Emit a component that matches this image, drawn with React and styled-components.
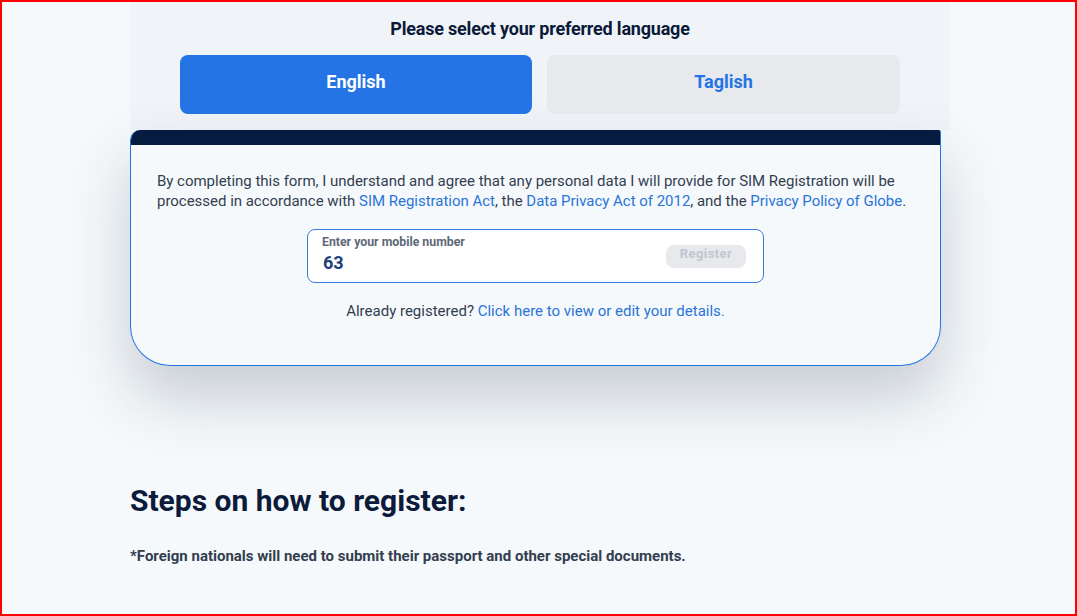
import React from "react";
import styled, { createGlobalStyle } from "styled-components";

const colors = {
  page: "#f5f9fc",
  panel: "#f0f3f8",
  navy: "#061b40",
  blue: "#2474e5",
  link: "#2a74d8",
  text: "#333e50",
  grey: "#e8e9ec",
};

const GlobalStyle = createGlobalStyle`
  html, body {
    margin: 0;
    padding: 0;
    background: ${colors.page};
    font-family: Roboto, "Liberation Sans", Arial, sans-serif;
  }
  #root {
    box-sizing: border-box;
    height: 100vh;
    overflow: hidden;
    border: 2px solid #ff0000;
  }
`;

const Page = styled.div`
  padding-left: 128px;
  width: 820px;
`;

const LangPanel = styled.section`
  background: ${colors.panel};
  padding: 16px 50px 16px;
  display: flex;
  flex-direction: column;
  align-items: center;
`;

const LangTitle = styled.h2`
  margin: 0 0 15px;
  font-size: 18px;
  line-height: 22px;
  font-weight: 700;
  color: #0b1a38;
  letter-spacing: -0.2px;
`;

const LangRow = styled.div`
  display: grid;
  grid-template-columns: 352px 353px;
  gap: 15px;
  width: 100%;
`;

const LangButton = styled.button`
  height: 59px;
  border: none;
  border-radius: 8px;
  padding: 0 0 6px;
  background: ${(p) => (p.$active ? colors.blue : colors.grey)};
  color: ${(p) => (p.$active ? "#ffffff" : colors.blue)};
  font-family: inherit;
  font-size: 18px;
  font-weight: 700;
  cursor: pointer;
`;

const Card = styled.section`
  width: 811px;
  box-sizing: border-box;
  background: ${colors.page};
  border: 1px solid ${colors.blue};
  border-top: none;
  border-radius: 10px 2px 40px 40px;
  box-shadow: 0 32px 60px rgba(40, 48, 60, 0.22);
  overflow: hidden;
`;

const CardBar = styled.div`
  height: 15px;
  background: ${colors.navy};
  margin: 0 -1px;
`;

const CardBody = styled.div`
  padding: 26px 26px 44px;
  display: flex;
  flex-direction: column;
  align-items: center;
`;

const Consent = styled.p`
  margin: 0;
  align-self: stretch;
  font-size: 15px;
  line-height: 20px;
  color: ${colors.text};
  letter-spacing: -0.02px;
`;

const Link = styled.a`
  color: ${colors.link};
  text-decoration: none;
`;

const NumberBox = styled.div`
  margin-top: 18px;
  width: 457px;
  height: 54px;
  box-sizing: border-box;
  background: #ffffff;
  border: 1px solid #3d7bd9;
  border-radius: 8px;
  padding: 5px 17px 0 14px;
  display: flex;
  align-items: flex-start;
  justify-content: space-between;
`;

const NumberField = styled.div`
  display: flex;
  flex-direction: column;
`;

const FieldLabel = styled.span`
  font-size: 12.3px;
  line-height: 14px;
  font-weight: 700;
  color: #5d6878;
`;

const FieldValue = styled.span`
  margin-top: 3px;
  padding-left: 1px;
  font-size: 18px;
  line-height: 22px;
  font-weight: 700;
  color: #1d3f7a;
`;

const RegisterButton = styled.button`
  margin-top: 10px;
  width: 80px;
  height: 23px;
  border: none;
  border-radius: 8px;
  background: ${colors.grey};
  color: #c2c6ce;
  font-family: inherit;
  font-size: 13px;
  font-weight: 700;
  letter-spacing: 0.4px;
  padding: 0 0 7px;
`;

const Already = styled.p`
  margin: 18px 0 0;
  font-size: 15px;
  line-height: 20px;
  color: ${colors.text};
`;

const Steps = styled.section`
  padding-top: 117px;
`;

const StepsTitle = styled.h1`
  margin: 0;
  font-size: 30px;
  line-height: 36px;
  font-weight: 700;
  color: #0c1b3a;
`;

const Note = styled.p`
  margin: 28px 0 0;
  font-size: 15px;
  line-height: 18px;
  font-weight: 700;
  color: ${colors.text};
`;

const App = () => {
  return (
    <>
      <GlobalStyle />
      <Page>
        <LangPanel>
          <LangTitle>Please select your preferred language</LangTitle>
          <LangRow>
            <LangButton $active>English</LangButton>
            <LangButton>Taglish</LangButton>
          </LangRow>
        </LangPanel>
        <Card>
          <CardBar />
          <CardBody>
            <Consent>
              By completing this form, I understand and agree that any personal data I will provide for SIM Registration will be processed in accordance with{" "}
              <Link href="#">SIM Registration Act</Link>, the{" "}
              <Link href="#">Data Privacy Act of 2012</Link>, and the{" "}
              <Link href="#">Privacy Policy of Globe</Link>.
            </Consent>
            <NumberBox>
              <NumberField>
                <FieldLabel>Enter your mobile number</FieldLabel>
                <FieldValue>63</FieldValue>
              </NumberField>
              <RegisterButton disabled>Register</RegisterButton>
            </NumberBox>
            <Already>
              Already registered? <Link href="#">Click here to view or edit your details.</Link>
            </Already>
          </CardBody>
        </Card>
        <Steps>
          <StepsTitle>Steps on how to register:</StepsTitle>
          <Note>*Foreign nationals will need to submit their passport and other special documents.</Note>
        </Steps>
      </Page>
    </>
  );
};

export default App;
